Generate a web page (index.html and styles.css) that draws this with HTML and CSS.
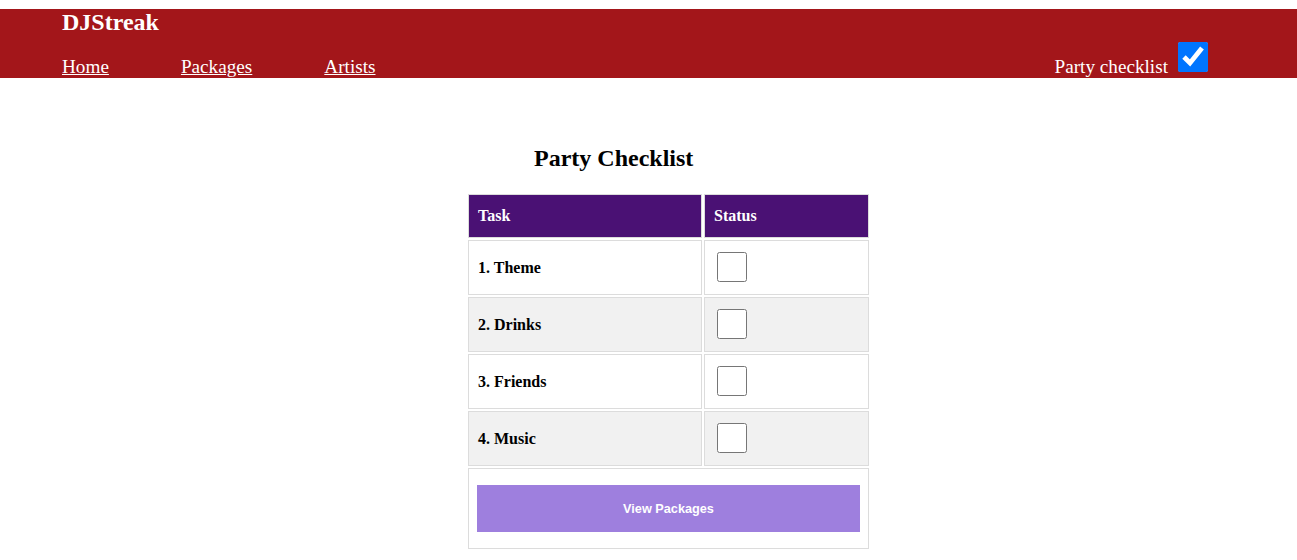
FILE: index.html
```html
<!DOCTYPE html>
<html lang="en">
<head>
<meta charset="utf-8">
<title>DJStreak - Party Checklist</title>
<link rel="stylesheet" href="styles.css">
</head>
<body>
<header class="site-header">
  <div class="brand">DJStreak</div>
  <div class="nav-row">
    <nav class="nav">
      <a href="#">Home</a>
      <a href="#">Packages</a>
      <a href="#">Artists</a>
    </nav>
    <label class="party-toggle">
      <span class="party-label">Party checklist</span>
      <input type="checkbox" class="big-check" checked>
    </label>
  </div>
</header>
<main class="main">
  <h2 class="title">Party Checklist</h2>
  <table class="checklist">
    <thead>
      <tr><th class="col-task">Task</th><th class="col-status">Status</th></tr>
    </thead>
    <tbody>
      <tr><td>1. Theme</td><td><input type="checkbox" class="row-check"></td></tr>
      <tr class="alt"><td>2. Drinks</td><td><input type="checkbox" class="row-check"></td></tr>
      <tr><td>3. Friends</td><td><input type="checkbox" class="row-check"></td></tr>
      <tr class="alt"><td>4. Music</td><td><input type="checkbox" class="row-check"></td></tr>
      <tr><td colspan="2"><button class="btn" type="button">View Packages</button></td></tr>
    </tbody>
  </table>
</main>
</body>
</html>
```
FILE: styles.css
```css
html, body {
  margin: 0;
  padding: 0;
}
body {
  font-family: "Liberation Serif", "Times New Roman", serif;
  color: #000;
  background: #fff;
}
.site-header {
  margin-top: 9px;
  background: #a3161a;
  color: #fff;
  padding: 0 85px 0 62px;
}
.brand {
  font-size: 24px;
  font-weight: bold;
  line-height: 27px;
}
.nav-row {
  display: flex;
  justify-content: space-between;
  align-items: flex-end;
  margin-top: 6px;
}
.nav {
  display: flex;
  gap: 72px;
  font-size: 19.2px;
  line-height: 22px;
}
.nav a {
  color: #fff;
  text-decoration: underline;
}
.party-toggle {
  display: flex;
  align-items: flex-end;
  font-size: 19.2px;
  line-height: 22px;
}
.party-label {
  margin-right: 6px;
}
.big-check {
  width: 30px;
  height: 30px;
  margin: 0 4px 6px;
  display: block;
}
.main {
  padding-top: 67px;
}
.title {
  margin: 0 0 21px 534px;
  font-size: 24px;
  font-weight: bold;
  line-height: 26px;
}
.checklist {
  margin-left: 466px;
  border-collapse: separate;
  border-spacing: 2px;
  font-size: 16px;
}
.checklist th,
.checklist td {
  border: 1px solid #dcdcdc;
  text-align: left;
  font-weight: bold;
  vertical-align: middle;
}
.checklist th {
  background: #4a1174;
  color: #fff;
  padding: 12px 8px 12px 9px;
  line-height: 18px;
}
.col-task {
  width: 215px;
}
.col-status {
  width: 146px;
}
.checklist td {
  padding: 8px 8px 8px 9px;
  line-height: 18px;
  background: #fff;
}
.checklist tr.alt td {
  background: #f1f1f1;
}
.row-check {
  display: block;
  width: 30px;
  height: 30px;
  margin: 3px 4px 4px 3px;
}
.btn {
  display: block;
  width: 100%;
  height: 47px;
  margin: 8px 0;
  border: none;
  background: #9e7fde;
  color: #fff;
  font-family: "Liberation Sans", Arial, sans-serif;
  font-weight: bold;
  font-size: 12.7px;
  cursor: pointer;
}
.checklist td[colspan] {
  padding: 8px;
}
```
